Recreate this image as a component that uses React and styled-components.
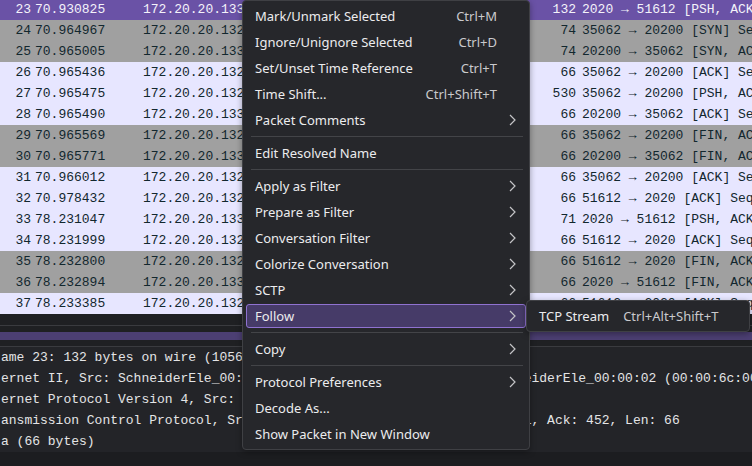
import React from 'react';
import styled, { createGlobalStyle } from 'styled-components';

const GlobalStyle = createGlobalStyle`
  body {
    margin: 0;
    background: #1c1d20;
    overflow: hidden;
  }
`;

const Window = styled.div`
  position: relative;
  width: 752px;
  height: 466px;
  overflow: hidden;
  display: flex;
  flex-direction: column;
  background: #1c1d20;
  font-family: 'Liberation Mono', 'DejaVu Sans Mono', monospace;
  font-size: 13px;
`;

const PacketList = styled.div`
  margin-top: -1px;
  display: flex;
  flex-direction: column;
`;

const rowColors = {
  selected: { bg: '#6a52a6', fg: '#f4f2fa' },
  gray: { bg: '#a0a0a0', fg: '#12272e' },
  tcp: { bg: '#e7e6ff', fg: '#12272e' },
};

const Row = styled.div`
  display: grid;
  grid-template-columns: 31px 112px 150px 150px 80px 53px 1fr;
  height: 21px;
  line-height: 21px;
  white-space: nowrap;
  overflow: hidden;
  background: ${(p) => rowColors[p.$kind].bg};
  color: ${(p) => rowColors[p.$kind].fg};
`;

const Cell = styled.span`
  overflow: hidden;
  text-align: ${(p) => (p.$right ? 'right' : 'left')};
  padding-left: ${(p) => p.$pad || 0}px;
`;

const Splitter = styled.div`
  height: 11px;
  background: #1f2023;
`;

const ScrollTrack = styled.div`
  height: 14px;
  border-top: 1px solid #3a3b3f;
  border-bottom: 1px solid #3a3b3f;
  background: #1f2023;
  padding-top: 6px;
`;

const ScrollThumb = styled.div`
  height: 8px;
  background: #4c3f73;
`;

const Details = styled.div`
  height: 105px;
  background: #232428;
  color: #e4e4e6;
  padding-left: 1px;
`;

const DetailLine = styled.div`
  height: 21px;
  line-height: 21px;
  white-space: pre;
  overflow: hidden;
`;

const Menu = styled.div`
  position: absolute;
  left: 242px;
  top: 0;
  width: 286px;
  display: flex;
  flex-direction: column;
  padding: 2px 0;
  background: #26272b;
  border: 1px solid #3f4044;
  border-radius: 4px;
  box-shadow: 0 2px 6px rgba(0, 0, 0, 0.35);
  font-family: 'Noto Sans', 'Open Sans', sans-serif;
  font-size: 13px;
  color: #ececee;
`;

const SubMenu = styled(Menu)`
  left: 526px;
  top: 300px;
  width: 222px;
`;

const Item = styled.div`
  box-sizing: border-box;
  display: grid;
  grid-template-columns: auto 1fr 28px;
  align-items: center;
  height: 24px;
  margin: 1px 3px;
  padding-left: 8px;
  border: 1px solid ${(p) => (p.$active ? '#8f72d0' : 'transparent')};
  border-radius: 3px;
  background: ${(p) => (p.$active ? '#463b68' : 'transparent')};
  white-space: nowrap;
`;

const Shortcut = styled.span`
  text-align: right;
  color: #cacacd;
  padding-left: 14px;
`;

const Arrow = styled.span`
  display: flex;
  justify-content: center;
  padding-left: 2px;
  color: #c4c4c7;
`;

const Separator = styled.div`
  height: 1px;
  margin: 3px 6px 3px 8px;
  background: #434448;
`;

const Chevron = () => (
  <svg width="7" height="12" viewBox="0 0 7 12">
    <polyline points="1,1 6,6 1,11" fill="none" stroke="currentColor" strokeWidth="1.2" />
  </svg>
);

const packets = [
  [23, '70.930825', '133', 132, '2020 → 51612 [PSH, ACK] Seq=1 Ack=452', 'selected'],
  [24, '70.964967', '132', 74, '35062 → 20200 [SYN] Seq=0 Win=64240', 'gray'],
  [25, '70.965005', '133', 74, '20200 → 35062 [SYN, ACK] Seq=0 Ack=1', 'gray'],
  [26, '70.965436', '132', 66, '35062 → 20200 [ACK] Seq=1 Ack=1', 'tcp'],
  [27, '70.965475', '132', 530, '35062 → 20200 [PSH, ACK] Seq=1 Ack=1', 'tcp'],
  [28, '70.965490', '133', 66, '20200 → 35062 [ACK] Seq=1 Ack=465', 'tcp'],
  [29, '70.965569', '132', 66, '35062 → 20200 [FIN, ACK] Seq=465', 'gray'],
  [30, '70.965771', '133', 66, '20200 → 35062 [FIN, ACK] Seq=1', 'gray'],
  [31, '70.966012', '132', 66, '35062 → 20200 [ACK] Seq=466 Ack=2', 'tcp'],
  [32, '70.978432', '132', 66, '51612 → 2020 [ACK] Seq=452 Ack=67', 'tcp'],
  [33, '78.231047', '133', 71, '2020 → 51612 [PSH, ACK] Seq=67', 'tcp'],
  [34, '78.231999', '132', 66, '51612 → 2020 [ACK] Seq=452 Ack=72', 'tcp'],
  [35, '78.232800', '132', 66, '51612 → 2020 [FIN, ACK] Seq=452', 'gray'],
  [36, '78.232894', '133', 66, '2020 → 51612 [FIN, ACK] Seq=72', 'gray'],
  [37, '78.233385', '132', 66, '51612 → 2020 [ACK] Seq=453 Ack=73', 'tcp'],
];

const details = [
  'ame 23: 132 bytes on wire (1056 bits), 132 bytes captured',
  'ernet II, Src: SchneiderEle_00:00:01 (00:00:6c:00:00:01), Dst: SchneiderEle_00:00:02 (00:00:6c:00:00:02)',
  'ernet Protocol Version 4, Src: 172.20.20.133, Dst: 172.20.20.132',
  'ansmission Control Protocol, Src Port: 2020, Dst Port: 51612, Seq: 1, Ack: 452, Len: 66',
  'a (66 bytes)',
];

const menu = [
  { label: 'Mark/Unmark Selected', keys: 'Ctrl+M' },
  { label: 'Ignore/Unignore Selected', keys: 'Ctrl+D' },
  { label: 'Set/Unset Time Reference', keys: 'Ctrl+T' },
  { label: 'Time Shift...', keys: 'Ctrl+Shift+T' },
  { label: 'Packet Comments', sub: true },
  'sep',
  { label: 'Edit Resolved Name' },
  'sep',
  { label: 'Apply as Filter', sub: true },
  { label: 'Prepare as Filter', sub: true },
  { label: 'Conversation Filter', sub: true },
  { label: 'Colorize Conversation', sub: true },
  { label: 'SCTP', sub: true },
  { label: 'Follow', sub: true, active: true },
  'sep',
  { label: 'Copy', sub: true },
  'sep',
  { label: 'Protocol Preferences', sub: true },
  { label: 'Decode As...' },
  { label: 'Show Packet in New Window' },
];

const MenuEntry = ({ label, keys, sub, active }) => (
  <Item $active={active}>
    <span>{label}</span>
    <Shortcut>{keys}</Shortcut>
    <Arrow>{sub && <Chevron />}</Arrow>
  </Item>
);

export default function App() {
  return (
    <Window>
      <GlobalStyle />
      <PacketList>
        {packets.map(([no, time, src, len, info, kind]) => (
          <Row key={no} $kind={kind}>
            <Cell $right>{no}</Cell>
            <Cell $pad={4}>{time}</Cell>
            <Cell>172.20.20.{src}</Cell>
            <Cell>172.20.20.{src === '133' ? '132' : '133'}</Cell>
            <Cell>TCP</Cell>
            <Cell $right>{len}</Cell>
            <Cell $pad={6}>{info}</Cell>
          </Row>
        ))}
      </PacketList>
      <Splitter />
      <ScrollTrack>
        <ScrollThumb />
      </ScrollTrack>
      <Details>
        {details.map((line) => (
          <DetailLine key={line}>{line}</DetailLine>
        ))}
      </Details>

      <Menu>
        {menu.map((entry, i) =>
          entry === 'sep' ? <Separator key={i} /> : <MenuEntry key={i} {...entry} />
        )}
      </Menu>
      <SubMenu>
        <MenuEntry label="TCP Stream" keys="Ctrl+Alt+Shift+T" />
      </SubMenu>
    </Window>
  );
}
